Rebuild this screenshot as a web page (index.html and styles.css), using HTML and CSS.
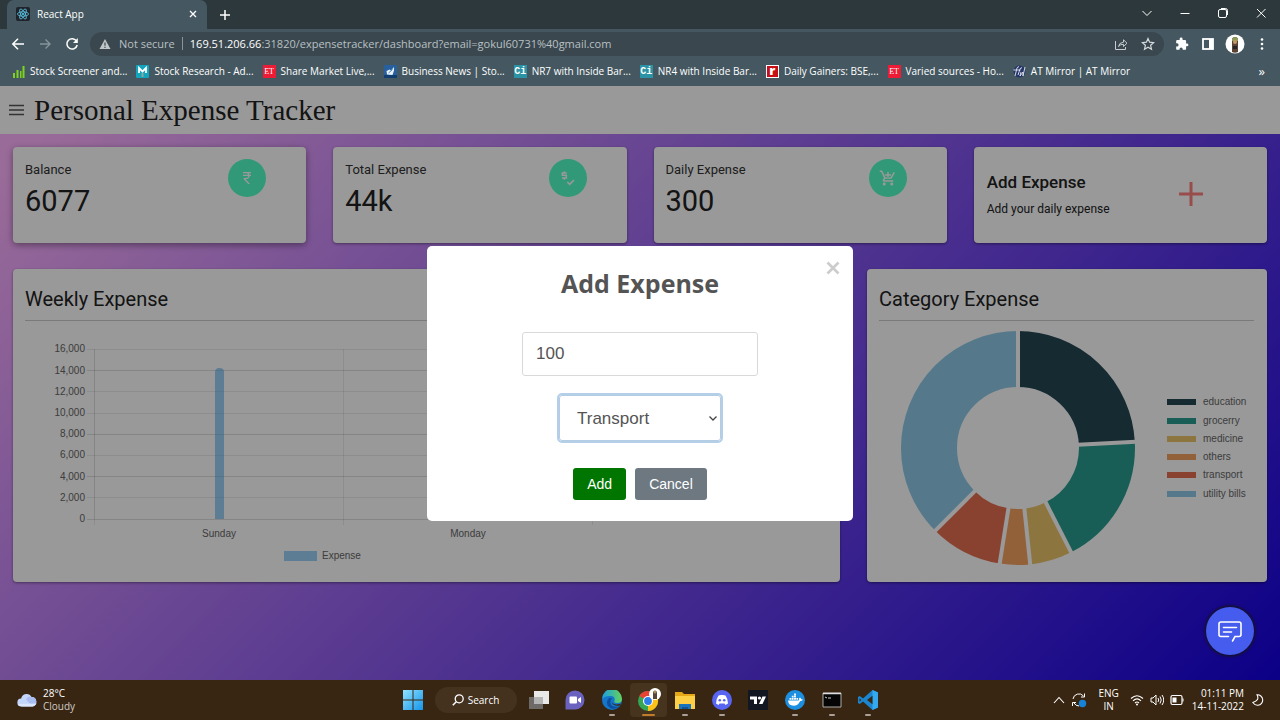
FILE: index.html
```html
<!DOCTYPE html>
<html lang="en">
<head>
<meta charset="utf-8">
<title>React App</title>
<link rel="stylesheet" href="styles.css">
</head>
<body>
<header class="browser">
  <div class="tabstrip">
    <div class="tab">
      <svg class="icon-14" viewBox="0 0 14 14"><rect width="14" height="14" rx="2" fill="#20232a"/><g fill="none" stroke="#61dafb" stroke-width=".7"><ellipse cx="7" cy="7" rx="5.6" ry="2.2"/><ellipse cx="7" cy="7" rx="5.6" ry="2.2" transform="rotate(60 7 7)"/><ellipse cx="7" cy="7" rx="5.6" ry="2.2" transform="rotate(120 7 7)"/></g><circle cx="7" cy="7" r="1" fill="#61dafb"/></svg>
      <span class="tab-title">React App</span>
      <button class="plain" aria-label="Close tab"><svg class="icon-10" viewBox="0 0 10 10"><path d="M2 2l6 6M8 2L2 8" stroke="#fff" stroke-width="1.3"/></svg></button>
    </div>
    <button class="plain new-tab" aria-label="New tab"><svg class="icon-14" viewBox="0 0 14 14"><path d="M7 2v10M2 7h10" stroke="#fff" stroke-width="1.5"/></svg></button>
    <div class="window-controls">
      <button class="plain" aria-label="Search tabs"><svg class="icon-12" viewBox="0 0 12 12"><path d="M1.5 4L6 8.5 10.500 4" fill="none" stroke="#fff"/></svg></button>
      <button class="plain" aria-label="Minimize"><svg class="icon-12" viewBox="0 0 12 12"><path d="M1.500 6.500h9" stroke="#fff"/></svg></button>
      <button class="plain" aria-label="Restore"><svg class="icon-12" viewBox="0 0 12 12"><path d="M4 1.500h4.500q2 0 2 2V8" fill="none" stroke="#fff"/><rect x="1.500" y="2.500" width="8" height="8" rx="1.500" fill="none" stroke="#fff"/></svg></button>
      <button class="plain" aria-label="Close"><svg class="icon-12" viewBox="0 0 12 12"><path d="M2 2l8.500 8.500M10.500 2L2 10.500" stroke="#fff"/></svg></button>
    </div>
  </div>
  <div class="toolbar">
    <div class="nav-buttons">
      <button class="plain" aria-label="Back"><svg class="icon-14" viewBox="0 0 14 14"><path d="M13 7H2M7 1.800L1.800 7 7 12.200" fill="none" stroke="#fff" stroke-width="1.500"/></svg></button>
      <button class="plain" aria-label="Forward"><svg class="icon-14" viewBox="0 0 14 14"><path d="M2 7h10M7.500 2.500L12 7l-4.500 4.500" fill="none" stroke="#87949b" stroke-width="1.400"/></svg></button>
      <button class="plain" aria-label="Reload"><svg class="icon-14" viewBox="0 0 14 14"><path d="M11.600 4.200A5.200 5.200 0 1 0 12.200 8" fill="none" stroke="#fff" stroke-width="1.500"/><path d="M12.800 1v5H8z" fill="#fff"/></svg></button>
    </div>
    <div class="omnibox">
      <svg class="icon-12" viewBox="0 0 12 12"><path d="M6 1l5.500 10H.5z" fill="#bfc5c8"/><path d="M6 4.500v3.300M6 8.700v1.200" stroke="#3a474e" stroke-width="1.200"/></svg>
      <span class="not-secure">Not secure</span>
      <span class="url"><b>169.51.206.66</b>:31820/expensetracker/dashboard?email=gokul60731%40gmail.com</span>
      <svg class="icon-14" viewBox="0 0 14 14"><g fill="none" stroke="#c5cbce" stroke-width="1"><path d="M1.500 4v8.500h10V10"/><path d="M4.500 9.500q.5-4 5-4.300V2.800L13 6.200 9.500 9.500V7.300Q6.500 7 4.500 9.500z"/></g></svg>
      <svg class="icon-14 star" viewBox="0 0 14 14"><path d="M7 1.500l1.600 3.700 4 .4-3 2.700.9 4L7 10.200l-3.500 2.100.9-4-3-2.700 4-.4z" fill="none" stroke="#d5dadc" stroke-width="1.200"/></svg>
    </div>
    <div class="extensions">
      <svg class="icon-14" viewBox="0 0 24 24"><path fill="#fff" d="M20.500 11H19V7a2 2 0 0 0-2-2h-4V3.500a2.500 2.500 0 0 0-5 0V5H4a2 2 0 0 0-2 2v3.800h1.500a2.700 2.700 0 0 1 0 5.400H2V20a2 2 0 0 0 2 2h3.800v-1.500a2.700 2.700 0 0 1 5.400 0V22H17a2 2 0 0 0 2-2v-4h1.500a2.500 2.500 0 0 0 0-5z"/></svg>
      <svg class="icon-14" viewBox="0 0 14 14"><rect x="2" y="2" width="10" height="10" fill="none" stroke="#fff" stroke-width="1.800"/><path d="M8 2h4v10H8z" fill="#fff"/></svg>
      <svg class="icon-20" viewBox="0 0 20 20"><circle cx="10" cy="10" r="9.500" fill="#fff"/><path d="M7 6q0-3 3-3t3 3v12q-3 1.500-6 0z" fill="#5a4334"/><path d="M7 5q3-4 6 0v2H7z" fill="#8d9a58"/><circle cx="10" cy="8" r="2" fill="#c29a68"/><path d="M8 12h4v3H8z" fill="#25242a"/></svg>
      <svg class="icon-14" viewBox="0 0 14 14" fill="#fff"><circle cx="7" cy="2.500" r="1.300"/><circle cx="7" cy="7" r="1.300"/><circle cx="7" cy="11.500" r="1.300"/></svg>
    </div>
  </div>
  <nav class="bookmarks">
    <a href="#"><svg class="icon-13" viewBox="0 0 13 13" fill="#7ed321"><path d="M1 8h2v5H1zM4.500 5h2v8h-2zM8 6h1.500v7H8zM10.500 1h2v12h-2z"/></svg>Stock Screener and...</a>
    <a href="#"><svg class="icon-13" viewBox="0 0 13 13"><rect width="13" height="13" rx="1" fill="#12a5bd"/><path d="M3 8V3l3.500 3.500L10 3v5" fill="none" stroke="#fff" stroke-width="1.800"/><path d="M5.500 8h2v4h-2z" fill="#8ca89e"/></svg>Stock Research - Ad...</a>
    <a href="#"><span class="favicon et">ET</span>Share Market Live,...</a>
    <a href="#"><svg class="icon-13" viewBox="0 0 13 13"><rect width="13" height="13" rx="1" fill="#26609e"/><path d="M0 10h13v3H0z" fill="#103e70"/><path d="M2.500 6l3-1.500 1.500 1 3-3.500v3.500L8.500 10 3 9.500z" fill="#e9f2fa"/><path d="M4.500 8l4-3.500" stroke="#4a82b5"/></svg>Business News | Sto...</a>
    <a href="#"><span class="favicon ci">Ci</span>NR7 with Inside Bar...</a>
    <a href="#"><span class="favicon ci">Ci</span>NR4 with Inside Bar...</a>
    <a href="#"><span class="favicon rediff">r</span>Daily Gainers: BSE,...</a>
    <a href="#"><span class="favicon et">ET</span>Varied sources - Ho...</a>
    <a href="#"><svg class="icon-13" viewBox="0 0 13 13"><circle cx="6.500" cy="6.500" r="6" fill="#243569"/><g fill="none" stroke="#e5e8ef" stroke-width=".9"><path d="M2 11L4 3q1-2 2-1M5 10l2-6q1-2 2-1M.5 5h7M8 7l-1 4 3-4v4l2-9"/></g></svg>AT Mirror | AT Mirror</a>
    <button class="plain more" aria-label="More bookmarks">»</button>
  </nav>
</header>

<main class="page">
  <div class="navbar">
    <button class="plain" aria-label="Menu"><svg class="icon-18" viewBox="0 0 18 18"><path d="M1 4.500h15M1 9h15M1 13.500h15" stroke="#555" stroke-width="1.500"/></svg></button>
    <h1>Personal Expense Tracker</h1>
  </div>
  <div class="dashboard">
    <section class="card stat raised">
      <div><h2>Balance</h2><p class="value">6077</p></div>
      <span class="badge"><svg class="icon-16" viewBox="0 0 24 24"><path fill="#fff" d="M13.660 7c-.56-1.180-1.760-2-3.160-2H6V3h12v2h-3.260c.48.580.84 1.260 1.050 2H18v2h-2.020c-.25 2.800-2.610 5-5.480 5h-.73l6.730 7h-2.770L7 14v-2h3.500c1.760 0 3.220-1.300 3.460-3H6V7h7.660z"/></svg></span>
    </section>
    <section class="card stat">
      <div><h2>Total Expense</h2><p class="value">44k</p></div>
      <span class="badge"><svg class="icon-16" viewBox="0 0 24 24" fill="none" stroke="#fff" stroke-width="2.300"><path d="M10 4.500H3.500V8h6v4H3M6.500 2v2.500M6.500 12v2.500M11 18l3.500 3.500L21 15"/></svg></span>
    </section>
    <section class="card stat">
      <div><h2>Daily Expense</h2><p class="value">300</p></div>
      <span class="badge"><svg class="icon-18" viewBox="0 0 24 24"><path fill="#fff" d="M12 4h1v3h3v2h-3v3h-2V9H8V7h3V4zM7 18c-1.100 0-1.990.9-1.990 2S5.900 22 7 22s2-.9 2-2-.9-2-2-2zm10 0c-1.100 0-1.990.9-1.990 2s.89 2 1.990 2 2-.9 2-2-.9-2-2-2zm-9.830-3.250.03-.12.900-1.630h7.450c.75 0 1.410-.41 1.750-1.030l3.860-7.010L19.420 4h-.01l-1.100 2-2.760 5H8.530l-.13-.27L6.160 6l-.95-2-.94-2H1v2h2l3.600 7.590-1.350 2.450c-.16.280-.25.610-.25.960 0 1.100.9 2 2 2h12v-2H7.420c-.13 0-.25-.11-.25-.25z"/></svg></span>
    </section>
    <section class="card add-card">
      <div><h2>Add Expense</h2><p>Add your daily expense</p></div>
      <svg class="plus" viewBox="0 0 24 24"><path d="M12 0v24M0 12h24" stroke="#ff7f7f" stroke-width="3"/></svg>
    </section>

    <section class="card weekly">
      <h2>Weekly Expense</h2>
      <svg class="chart" viewBox="0 0 802 248" role="img" aria-label="Weekly expense bar chart">
        <g stroke="#000">
          <path stroke-opacity=".13" d="M62 49.500h506M62 113.500h506M62 155.500h506M62 198.500h506M69.500 28v170"/>
          <path stroke-opacity=".08" d="M62 28.500h506M62 70.500h506M62 92.500h506M62 134.500h506M62 176.500h506M69.500 198v6M318.500 28v176M567.500 28v176"/>
        </g>
        <path d="M190 198V51q0-4 4.500-4t4.500 4v147z" fill="#35a2eb" fill-opacity=".5"/>
        <g class="chart-text" text-anchor="end">
          <text x="60" y="31">16,000</text><text x="60" y="53">14,000</text><text x="60" y="74">12,000</text><text x="60" y="95">10,000</text><text x="60" y="116">8,000</text><text x="60" y="137">6,000</text><text x="60" y="159">4,000</text><text x="60" y="180">2,000</text><text x="60" y="201">0</text>
        </g>
        <g class="chart-text" text-anchor="middle"><text x="194" y="216">Sunday</text><text x="443" y="216">Monday</text></g>
        <path d="M259 230h33v10h-33z" fill="#35a2eb" fill-opacity=".5"/>
        <text class="chart-text" x="297" y="238">Expense</text>
      </svg>
    </section>

    <section class="card category">
      <h2>Category Expense</h2>
      <svg class="chart" viewBox="0 0 375 248" role="img" aria-label="Category expense doughnut chart">
        <g transform="translate(139 127)">
          <g transform="rotate(-90)" fill="none" stroke-width="56">
            <circle r="89" pathLength="360" stroke="#264653" stroke-dasharray="87 273"/>
            <circle r="89" pathLength="360" stroke="#2a9d8f" stroke-dasharray="66 294" stroke-dashoffset="-87"/>
            <circle r="89" pathLength="360" stroke="#e9c46a" stroke-dasharray="21 339" stroke-dashoffset="-153"/>
            <circle r="89" pathLength="360" stroke="#f4a261" stroke-dasharray="15 345" stroke-dashoffset="-174"/>
            <circle r="89" pathLength="360" stroke="#e76f51" stroke-dasharray="36 324" stroke-dashoffset="-189"/>
            <circle r="89" pathLength="360" stroke="#8ecae6" stroke-dasharray="135 225" stroke-dashoffset="-225"/>
          </g>
          <g stroke="#fff" stroke-width="4">
            <path d="M0-60v-58"/><path d="M0-60v-58" transform="rotate(87)"/><path d="M0-60v-58" transform="rotate(153)"/><path d="M0-60v-58" transform="rotate(174)"/><path d="M0-60v-58" transform="rotate(189)"/><path d="M0-60v-58" transform="rotate(225)"/>
          </g>
        </g>
        <path fill="#264653" d="M288 78h29v6h-29z"/><path fill="#2a9d8f" d="M288 97h29v6h-29z"/><path fill="#e9c46a" d="M288 115h29v6h-29z"/><path fill="#f4a261" d="M288 133h29v6h-29z"/><path fill="#e76f51" d="M288 151h29v6h-29z"/><path fill="#8ecae6" d="M288 170h29v6h-29z"/>
        <g class="chart-text"><text x="324" y="84">education</text><text x="324" y="103">grocerry</text><text x="324" y="121">medicine</text><text x="324" y="139">others</text><text x="324" y="157">transport</text><text x="324" y="176">utility bills</text></g>
      </svg>
    </section>
  </div>

  <div class="backdrop">
    <form class="modal" role="dialog" aria-labelledby="modal-title">
      <button type="button" class="plain modal-close" aria-label="Close"><svg class="icon-14" viewBox="0 0 14 14"><path d="M1.500 1.500l11 11M12.500 1.500l-11 11" stroke="#ccc" stroke-width="2.600"/></svg></button>
      <h2 id="modal-title">Add Expense</h2>
      <input class="amount" type="text" value="100" aria-label="Amount">
      <div class="select-wrap">
        <select class="kind" aria-label="Category"><option>Transport</option><option>education</option><option>grocerry</option></select>
        <svg class="icon-10 caret" viewBox="0 0 10 10"><path d="M1.500 3.500L5 7l3.500-3.500" fill="none" stroke="#444" stroke-width="1.300"/></svg>
      </div>
      <div class="actions">
        <button type="button" class="btn add">Add</button>
        <button type="button" class="btn cancel">Cancel</button>
      </div>
    </form>
  </div>
  <button class="chat" aria-label="Open chat"><svg class="icon-26" viewBox="0 0 26 26"><path d="M11.500 18.500H4q-2 0-2-2V6q0-2 2-2h18q2 0 2 2v10.500q0 2-2 2h-4L15.500 23" fill="none" stroke="#fff" stroke-width="1.600" stroke-linecap="round"/><path d="M6.500 9.500h13M6.500 14h8" stroke="#fff" stroke-width="1.600" stroke-linecap="round"/></svg></button>
</main>

<footer class="taskbar">
  <div class="weather">
    <svg class="icon-20" viewBox="0 0 20 20"><path d="M4.500 16.500a4 4 0 0 1-.3-8A5.500 5.500 0 0 1 14.500 7 4.800 4.800 0 0 1 15.500 16.500z" fill="#c4d6fa"/><path d="M9 9.500a4 4 0 0 1 5.500-2.500A4.800 4.800 0 0 1 15.500 16.500z" fill="#a9bdf0"/><path d="M1 14q2 2.500 4 2.500h10q3-.3 4.500-3z" fill="#dce7fd"/></svg>
    <div><div>28°C</div><div class="muted">Cloudy</div></div>
  </div>
  <div class="dock">
    <button class="plain start" aria-label="Start"><svg class="icon-20" viewBox="0 0 20 20"><defs><linearGradient id="win" x2="1" y2="1"><stop stop-color="#8fe3ff"/><stop offset="1" stop-color="#1594ea"/></linearGradient></defs><path fill="url(#win)" d="M0 0h9.500v9.500H0zM10.500 0H20v9.500h-9.500zM0 10.500h9.500V20H0zM10.500 10.500H20V20h-9.500z"/></svg></button>
    <button class="search"><svg class="icon-12" viewBox="0 0 12 12"><circle cx="7.200" cy="4.800" r="4" fill="none" stroke="#fff" stroke-width="1.300"/><path d="M4.300 7.700L.8 11.200" stroke="#fff" stroke-width="1.500"/></svg>Search</button>
    <div class="apps">
      <button class="app" aria-label="Task view"><svg class="icon-20" viewBox="0 0 20 20"><path d="M5 1h15v13H5z" fill="#e9e9e9"/><path d="M0 7h14v12H0z" fill="#777" fill-opacity=".85"/><path d="M5 7h9v7H5z" fill="#b5b5b5"/></svg></button>
      <button class="app" aria-label="Chat"><svg class="icon-20" viewBox="0 0 20 20"><path d="M10 .5a9.500 9.500 0 1 1 0 19H.5V10A9.500 9.500 0 0 1 10 .5z" fill="#6b62c0"/><rect x="4.500" y="6.500" width="7.500" height="7" rx="1" fill="#fff"/><path d="M13 9l3-2v6l-3-2z" fill="#fff"/></svg></button>
      <button class="app open" aria-label="Edge"><svg class="icon-20" viewBox="0 0 20 20"><defs><linearGradient id="edge" x2="1"><stop stop-color="#1b9de2"/><stop offset="1" stop-color="#64d35b"/></linearGradient></defs><circle cx="10" cy="10" r="10" fill="#1477c9"/><path d="M0 9A10 10 0 0 1 20 9q0 4-4.500 4-4 0-3-2.500 1-4-3.500-4.500Q3 5.500 0 9z" fill="url(#edge)"/><path d="M7 8q-4 4-.5 8.500Q10 21 17.500 16.500q-8 1.500-9-3.500Q8 10 10 8z" fill="#0d4f9e"/><path d="M10.500 9q-2 2.500.5 4.500 3 2 8 0l-1 2q-6 1-8-2.500Q9 10.500 10.500 9z" fill="#3b2615"/></svg></button>
      <button class="app active" aria-label="Chrome"><svg class="icon-24" viewBox="0 0 24 24"><circle cx="11" cy="13" r="10" fill="#35a653"/><path d="M11 13L2.300 8A10 10 0 0 1 19.700 8z" fill="#e74335"/><path d="M11 13l8.700-5A10 10 0 0 1 11 23z" fill="#fbc116"/><circle cx="11" cy="13" r="5" fill="#fff"/><circle cx="11" cy="13" r="3.900" fill="#2d7de8"/><circle cx="18" cy="6" r="6" fill="#fff"/><path d="M16 4q2-3 4 0v7h-4z" fill="#5a4638"/><circle cx="18" cy="4" r="1.500" fill="#a7905e"/></svg></button>
      <button class="app open" aria-label="File Explorer"><svg class="icon-20" viewBox="0 0 20 20"><path d="M0 2h7l2 2h11v15H0z" fill="#e6a817"/><path d="M0 6h20v13H0z" fill="#fccf45"/><path d="M4 14h12v5H4z" fill="#1873bd"/><path d="M7 17h6v2H7z" fill="#0f5490"/></svg></button>
      <button class="app open" aria-label="Discord"><svg class="icon-20" viewBox="0 0 20 20"><circle cx="10" cy="10" r="10" fill="#5865f2"/><path d="M6.500 5.500L9 5h2l2.500.5q2.500 3.500 2.500 8L13.500 15l-1-1.500h-5l-1 1.500L4 13.500q0-4.500 2.500-8z" fill="#fff"/><circle cx="7.800" cy="10.300" r="1.300" fill="#5865f2"/><circle cx="12.200" cy="10.300" r="1.300" fill="#5865f2"/></svg></button>
      <button class="app" aria-label="TradingView"><svg class="icon-20" viewBox="0 0 20 20"><path d="M0 0h20v20H0z" fill="#131722"/><path d="M2 6.500h7V14H6V9.500H2zM14.500 6.500H18L14.500 14H11z" fill="#fff"/><circle cx="11.500" cy="8" r="1.600" fill="#fff"/></svg></button>
      <button class="app open" aria-label="Docker"><svg class="icon-20" viewBox="0 0 20 20"><circle cx="10" cy="10" r="10" fill="#1d8fe0"/><path d="M3 10.500h10.500q1-.5.5-2l1-1q1 .8 1.200 1.800 1.300-.2 1.800.5-1 1.400-3 1.400-2 4.500-6.500 4.500-5 0-5.500-5.200z" fill="#fff"/><path d="M4.500 8h1.800v1.800H4.500zM6.800 8h1.800v1.800H6.800zM9.100 8h1.800v1.800H9.100zM11.400 8h1.700v1.800h-1.700zM6.800 5.800h1.800v1.800H6.800zM9.100 5.800h1.800v1.800H9.100zM9.100 3.600h1.800v1.800H9.100z" fill="#fff"/></svg></button>
      <button class="app open" aria-label="Command prompt"><svg class="icon-20" viewBox="0 0 20 20"><path d="M1 3h18v14H1z" fill="#050505" stroke="#aaa"/><path d="M1 3.500h18" stroke="#ddd" stroke-width="1.500"/><path d="M3 7l2 1M6 8h3" stroke="#ccc"/></svg></button>
      <button class="app open" aria-label="VS Code"><svg class="icon-20" viewBox="0 0 20 20"><path d="M14.500 0L20 2.500v15L14.500 20 5 11.500 1.800 14 0 13V7l1.800-1L5 8.500z" fill="#1b86cf"/><path d="M14.500 0L20 2.500v15L14.500 20z" fill="#35a9ef"/><path d="M14.500 5.800v8.400L9 10zM1.500 8.300L3.300 10 1.500 11.700z" fill="#382613"/></svg></button>
    </div>
  </div>
  <div class="tray">
    <svg class="icon-12" viewBox="0 0 12 12"><path d="M1 9l5-5.500L11 9" fill="none" stroke="#fff" stroke-width="1.100"/></svg>
    <svg class="icon-16" viewBox="0 0 16 16"><g fill="none" stroke="#fff"><path d="M2 7a6 6 0 0 1 10.500-3M13.500 1.500v3.500H10M8 14a6 6 0 0 1-5-3M1.500 14v-3.500H5"/></g><circle cx="11.500" cy="11.500" r="3.700" fill="#1683d8"/></svg>
    <div class="lang"><div>ENG</div><div>IN</div></div>
    <div class="status">
      <svg class="icon-14" viewBox="0 0 14 14"><g fill="none" stroke="#fff" stroke-width="1.100"><path d="M1 5.500q6-5.500 12 0M3 7.800q4-3.800 8 0M5 10q2-2 4 0"/></g><circle cx="7" cy="11.600" r="1" fill="#fff"/></svg>
      <svg class="icon-14" viewBox="0 0 14 14"><g fill="none" stroke="#fff"><path d="M1 5h2l3-3v10L3 9H1zM8 5q1.500 2 0 4M10 3.500q2.500 3.500 0 7M12 2q3.500 5 0 10"/></g></svg>
      <svg class="icon-14" viewBox="0 0 14 14"><rect x="1" y="2.500" width="11" height="9" rx="1.500" fill="none" stroke="#fff" stroke-width="1.200"/><path d="M2.500 4.500h4v5h-4z" fill="#fff"/><path d="M12.500 5.500h1v3h-1z" fill="#fff"/></svg>
    </div>
    <div class="clock"><div>01:11 PM</div><div>14-11-2022</div></div>
    <svg class="icon-12" viewBox="0 0 12 12"><path d="M5 .8Q8 6.500.8 8.500 3 11.500 6 11.200A5.200 5.200 0 0 0 5 .8z" fill="none" stroke="#fff" stroke-width="1.100"/></svg>
  </div>
</footer>
</body>
</html>
```

FILE: styles.css
```css
* { box-sizing: border-box; }
body, h1, h2, p { margin: 0; }
body {
  display: flex;
  flex-direction: column;
  min-height: 100vh;
  font-family: "Open Sans", "Noto Sans", sans-serif;
  color: #fff;
}
button, input, select { font-family: inherit; }
svg { display: block; flex: none; }
.plain { border: 0; padding: 0; background: none; color: inherit; }
.icon-10 { width: 10px; height: 10px; }
.icon-12 { width: 12px; height: 12px; }
.icon-13 { width: 13px; height: 13px; }
.icon-14 { width: 14px; height: 14px; }
.icon-16 { width: 16px; height: 16px; }
.icon-18 { width: 18px; height: 18px; }
.icon-20 { width: 20px; height: 20px; }
.icon-24 { width: 24px; height: 24px; }
.icon-26 { width: 26px; height: 26px; }

/* Browser chrome */
.browser { background: #455861; }
.tabstrip {
  display: flex;
  align-items: stretch;
  height: 29px;
  padding-left: 7px;
  background: #2d383d;
}
.tab {
  display: flex;
  align-items: center;
  gap: 7px;
  width: 200px;
  padding: 0 9px 2px;
  border-radius: 7px 7px 0 0;
  background: #455861;
  font-size: 10px;
}
.tab-title { flex: 1; }
.new-tab { margin-left: 11px; }
.window-controls { display: flex; gap: 26px; margin-left: auto; padding: 0 13px 4px 0; align-items: center; }
.toolbar { display: flex; align-items: center; height: 29px; gap: 11px; padding: 0 11px; }
.nav-buttons { display: flex; gap: 13px; }
.omnibox {
  display: flex;
  flex: 1;
  align-items: center;
  height: 24px;
  padding: 0 9px;
  border-radius: 12px;
  background: #3a474e;
  color: #b9c0c4;
  font-size: 11px;
}
.not-secure { margin: 0 7px 0 8px; }
.url { flex: 1; padding-left: 7px; border-left: 1px solid #88939a; line-height: 13px; }
.url b { font-weight: 400; color: #fff; }
.star { margin-left: 13px; }
.extensions { display: flex; align-items: center; gap: 12px; }
.extensions .icon-20 { margin: 0 -2px; }
.bookmarks { display: flex; align-items: center; gap: 9px; height: 28px; padding: 0 15px 2px 12px; }
.bookmarks a {
  display: flex;
  align-items: center;
  gap: 5px;
  color: #fff;
  font-size: 10px;
  text-decoration: none;
  white-space: nowrap;
}
.more { margin-left: auto; font-size: 13px; }
.favicon { width: 13px; height: 13px; line-height: 13px; text-align: center; font-size: 8px; }
.et { background: #ed1b35; font-family: "Liberation Serif", serif; }
.ci { background: #2a93a5; font-family: "Liberation Mono", monospace; font-size: 10px; font-weight: 700; }
.rediff { border: 1px solid #fff; background: #c80f18; font-size: 13px; line-height: 9px; font-weight: 800; }

/* Application */
.page {
  position: relative;
  flex: 1;
  background: linear-gradient(135deg, #ffb2ff 5%, #1400e1);
  font-family: Roboto, sans-serif;
  color: #222;
}
.navbar {
  display: flex;
  align-items: center;
  gap: 8px;
  height: 48px;
  padding-left: 8px;
  background: #fff;
}
.navbar h1 { font-family: "Liberation Serif", serif; font-size: 29px; font-weight: 400; }
.dashboard {
  display: grid;
  grid-template-columns: repeat(12, minmax(0, 1fr));
  gap: 26px 27px;
  padding: 13px;
}
.card {
  grid-column: span 3;
  padding: 12px 13px 12px 12px;
  border-radius: 4px;
  background: #fff;
  box-shadow: 0 1px 3px rgba(0, 0, 0, .4);
}
.raised { box-shadow: 0 2px 7px rgba(0, 0, 0, .4); }
.stat { display: flex; justify-content: space-between; min-height: 96px; }
.stat h2 { font-size: 13px; line-height: 21px; font-weight: 400; color: #333; }
.value { font-size: 29px; line-height: 42px; }
.badge {
  display: flex;
  align-items: center;
  justify-content: center;
  width: 38px;
  height: 38px;
  margin-right: 27px;
  border-radius: 50%;
  background: #52ffc8;
}
.add-card { display: flex; align-items: center; justify-content: space-between; padding: 10px 13px 12px; }
.add-card h2 { font-size: 17px; line-height: 24px; font-weight: 500; }
.add-card p { font-size: 12px; line-height: 20px; margin-top: 5px; }
.plus { width: 24px; height: 24px; margin-right: 51px; }
.weekly, .category { padding-bottom: 0; }
.weekly { grid-column: span 8; }
.category { grid-column: span 4; }
.weekly h2, .category h2 {
  padding: 1px 0 3px;
  border-bottom: 1px solid #ccc;
  font-size: 20px;
  line-height: 35px;
  font-weight: 400;
}
.chart { width: 100%; height: auto; margin-bottom: 13px; }
.chart-text { font-family: "Liberation Sans", Arial, sans-serif; font-size: 10px; fill: #666; }

/* Dialog */
.backdrop {
  position: absolute;
  inset: 0;
  display: flex;
  align-items: center;
  justify-content: center;
  background: rgba(0, 0, 0, .4);
}
.modal {
  position: relative;
  display: flex;
  flex-direction: column;
  align-items: center;
  width: 33.333%;
  min-width: 320px;
  padding: 19px 20px 21px;
  border-radius: 5px;
  background: #fff;
  color: #545454;
}
.modal h2 { font-family: "Open Sans", sans-serif; font-size: 25px; line-height: 37px; font-weight: 700; }
.modal-close { position: absolute; top: 15px; right: 13px; }
.amount {
  width: 236px;
  height: 44px;
  margin-top: 30px;
  padding: 1px 13px 0;
  border: 1px solid #d9d9d9;
  border-radius: 3px;
  color: #545454;
  font-family: "Liberation Sans", Arial, sans-serif;
  font-size: 17px;
}
.select-wrap { position: relative; margin-top: 19px; }
.kind {
  appearance: none;
  display: block;
  width: 162px;
  height: 46px;
  padding: 1px 20px 0 17px;
  border: 1px solid #b4cce4;
  border-radius: 3px;
  outline: 2px solid #b4cfe8;
  background: #fff;
  color: #545454;
  font-family: "Liberation Sans", Arial, sans-serif;
  font-size: 17px;
}
.caret { position: absolute; top: 18px; right: 3px; pointer-events: none; }
.actions { display: flex; gap: 9px; margin-top: 27px; }
.btn {
  height: 32px;
  padding: 0 14px;
  border: 0;
  border-radius: 3px;
  color: #fff;
  font-family: "Liberation Sans", Arial, sans-serif;
  font-size: 14px;
}
.add { background: #007500; }
.cancel { background: #6e7881; }
.chat {
  position: absolute;
  right: 26px;
  bottom: 25px;
  display: flex;
  align-items: center;
  justify-content: center;
  width: 48px;
  height: 48px;
  border: 0;
  border-radius: 50%;
  background: #465cee;
  box-shadow: 0 0 2px 2px #15103a;
}

/* Taskbar */
.taskbar {
  display: flex;
  align-items: center;
  height: 40px;
  background: #382613;
  font-size: 10px;
  line-height: 13px;
}
.weather { display: flex; flex: 1; align-items: center; gap: 6px; padding-left: 17px; }
.muted { color: #d0cbc5; }
.dock { display: flex; align-items: center; gap: 4px; }
.start { display: flex; justify-content: center; width: 36px; }
.search {
  display: flex;
  align-items: center;
  justify-content: center;
  gap: 4px;
  width: 82px;
  height: 26px;
  border: 0;
  border-radius: 13px;
  background: #44321f;
  color: #fff;
  font-size: 10px;
}
.apps { display: flex; width: 366px; }
.app {
  position: relative;
  display: flex;
  flex: 1;
  align-items: center;
  justify-content: center;
  height: 34px;
  padding: 0;
  border: 0;
  border-radius: 4px;
  background: none;
}
.open::after, .active::after {
  content: "";
  position: absolute;
  bottom: 1px;
  width: 6px;
  height: 2px;
  border-radius: 1px;
  background: #aaa097;
}
.active { background: #46341f; }
.active::after { width: 13px; background: #c07c28; }
.tray { display: flex; flex: 1; align-items: center; justify-content: flex-end; gap: 6px; padding-right: 16px; }
.lang { margin: 0 5px; text-align: center; }
.status { display: flex; gap: 6px; margin-right: 2px; }
.clock { text-align: right; }
.tray > .icon-12:last-child { margin-left: 2px; }
```
